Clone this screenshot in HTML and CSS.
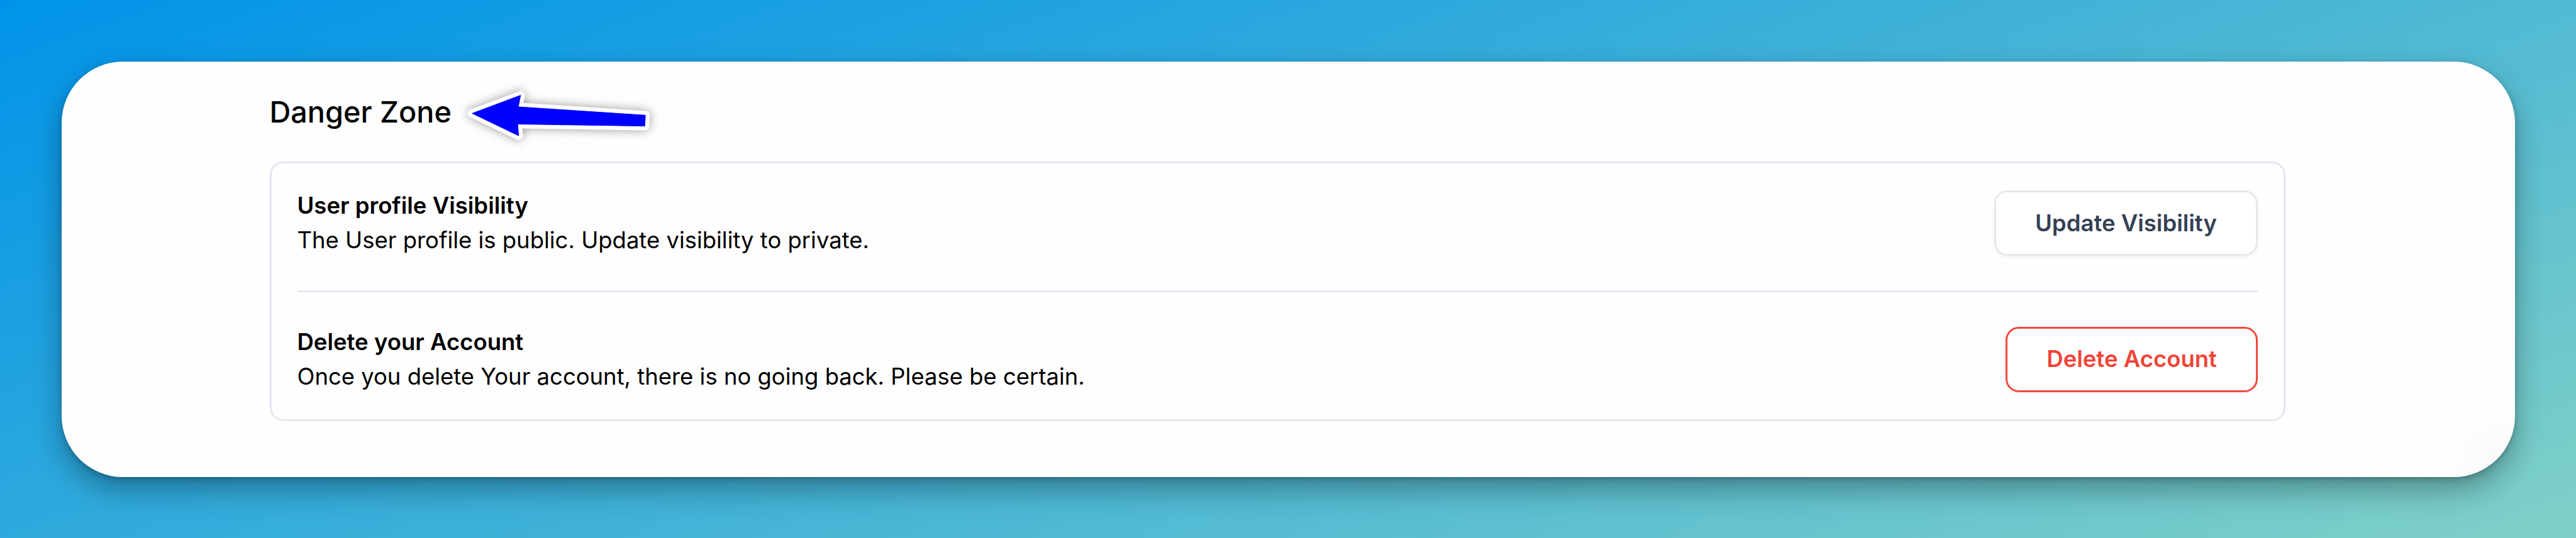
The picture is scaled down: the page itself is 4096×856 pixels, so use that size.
FILE: index.html
```html
<!DOCTYPE html>
<html lang="en">
  <head>
    <meta charset="utf-8">
    <title>Danger Zone</title>
    <link rel="stylesheet" href="styles.css">
  </head>
  <body>
    <main class="card">
      <h2 class="heading">Danger Zone</h2>
      <svg class="arrow" viewBox="0 0 340 130">
        <polygon class="arrow-outline" points="29.5,65 108.5,35.5 104.8,54.3 312,68 311,85.7 103.7,82.5 105.3,101.5"/>
        <polygon class="arrow-fill" points="29.5,65 108.5,35.5 104.8,54.3 312,68 311,85.7 103.7,82.5 105.3,101.5"/>
      </svg>
      <section class="panel">
        <div class="row">
          <div class="info">
            <h3 class="title">User profile Visibility</h3>
            <p class="description">The User profile is public. Update visibility to private.</p>
          </div>
          <button class="button">Update Visibility</button>
        </div>
        <hr class="divider">
        <div class="row">
          <div class="info">
            <h3 class="title">Delete your Account</h3>
            <p class="description">Once you delete Your account, there is no going back. Please be certain.</p>
          </div>
          <button class="button button-danger">Delete Account</button>
        </div>
      </section>
    </main>
  </body>
</html>
```

FILE: styles.css
```css
* {
  box-sizing: border-box;
}

body {
  margin: 0;
  padding: 97.5px;
  height: 856px;
  overflow: hidden;
  background: linear-gradient(160deg, #0093e9 0%, #80d0c7 100%);
  font-family: Inter, "Liberation Sans", sans-serif;
  font-size: 36.5px;
  line-height: 55px;
  color: #000;
}

.card {
  position: relative;
  height: 661px;
  padding: 46px 364.5px 0 331px;
  border-radius: 97.5px;
  background: radial-gradient(circle at 100% 100%, #f7f7f7 0, #fefefe 115px);
  box-shadow: 0 20px 46px rgba(0, 0, 0, 0.32), 0 3px 9px rgba(0, 0, 0, 0.2);
}

.heading {
  margin: 0 0 45px;
  font-size: 46.8px;
  font-weight: 500;
  line-height: 68px;
}

/* arrow pointing at the heading */
.arrow {
  position: absolute;
  left: 624px;
  top: 19.5px;
  width: 331.5px;
  height: 126.75px;
  overflow: visible;
}

.arrow-outline {
  fill: #fff;
  stroke: #fff;
  stroke-width: 14px;
  stroke-linejoin: round;
  filter: drop-shadow(0 0 8px rgba(0, 0, 0, 0.4));
}

.arrow-fill {
  fill: #00f;
  stroke: #00f;
  stroke-width: 1px;
  stroke-linejoin: round;
}

.panel {
  height: 413px;
  padding: 40.5px 41px;
  border: 3px solid #e2e7f0;
  border-radius: 21px;
}

.row {
  display: flex;
  justify-content: space-between;
  align-items: center;
}

.title,
.description {
  margin: 0;
  font-size: inherit;
  font-weight: 400;
}

.title {
  font-weight: 600;
}

.description {
  letter-spacing: -0.03px;
}

.divider {
  height: 3px;
  margin: 52px 0 51.5px;
  border: 0;
  background: #e2e7f0;
}

.button {
  height: 104px;
  padding: 0 62px;
  border: 3px solid #e6e8ee;
  border-radius: 21px;
  background: #fff;
  box-shadow: 0 2px 5px rgba(16, 24, 40, 0.06);
  color: #344054;
  font: inherit;
  font-weight: 600;
}

.button-danger {
  border-color: #f3483c;
  color: #f04438;
}
```
